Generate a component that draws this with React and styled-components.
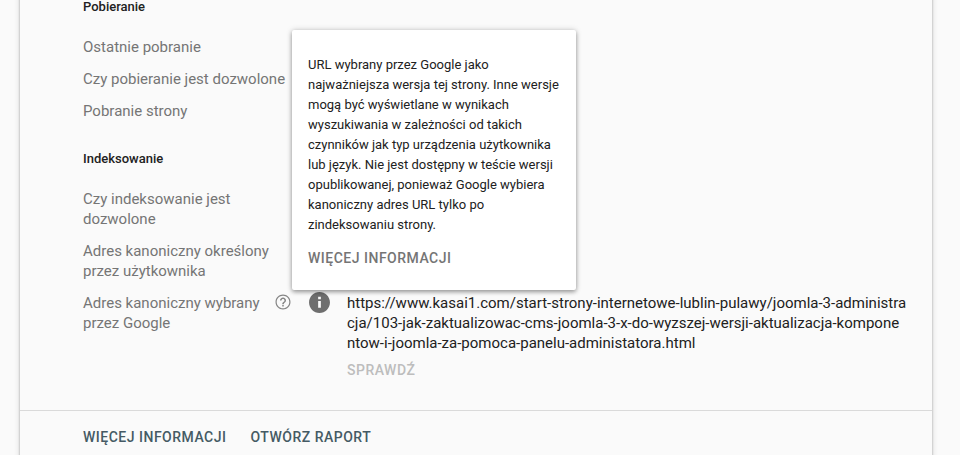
import React from "react";
import styled, { createGlobalStyle } from "styled-components";

const GlobalStyle = createGlobalStyle`
  *, *::before, *::after { box-sizing: border-box; }
  body {
    margin: 0;
    background: #fafafa;
    color: #212121;
    font-family: Roboto, "Liberation Sans", sans-serif;
    font-size: 15px;
    line-height: 20px;
  }
`;

const Page = styled.main`
  height: 100vh;
  overflow: hidden;
`;

const Card = styled.article`
  margin: -16px 28px 16px 20px;
  padding-top: 16px;
  background: #fafafa;
  box-shadow: 0 0 2px rgba(0, 0, 0, 0.28), 0 2px 6px rgba(0, 0, 0, 0.16);
`;

const Content = styled.div`
  display: flex;
  flex-direction: column;
  gap: 31px;
  padding: 0 25px 30px 63px;
`;

const Heading = styled.h2`
  margin: 0 0 23px;
  font-size: 13px;
  line-height: 14px;
  font-weight: 500;
`;

const Rows = styled.dl`
  display: flex;
  flex-direction: column;
  gap: 12px;
  margin: 0;
`;

const Row = styled.div`
  display: grid;
  grid-template-columns: 209px 55px minmax(0, 1fr);
`;

const Label = styled.dt`
  display: flex;
  justify-content: space-between;
  align-items: flex-start;
  color: #757575;
`;

const Value = styled.dd`
  margin: 0;
  word-break: break-all;
`;

const StatusCell = styled.dd`
  position: relative;
  display: flex;
  justify-content: center;
  align-items: flex-start;
  margin: 0;
`;

const IconButton = styled.button`
  display: flex;
  flex: none;
  justify-content: center;
  align-items: center;
  height: 18px;
  padding: 0;
  border: 0;
  background: none;
  color: ${(p) => p.$color};
  cursor: pointer;
`;

const TextButton = styled.button`
  display: block;
  margin-top: ${(p) => p.$top || 0}px;
  padding: 0;
  border: 0;
  background: none;
  color: ${(p) => p.$color};
  font: 500 14px/20px Roboto, "Liberation Sans", sans-serif;
  letter-spacing: 0.5px;
  text-transform: uppercase;
  cursor: pointer;

  &:disabled { cursor: default; }
`;

const TextLink = styled.a`
  color: ${(p) => p.$color};
  font-size: 14px;
  font-weight: 500;
  letter-spacing: 0.5px;
  text-decoration: none;
  text-transform: uppercase;
`;

const Tooltip = styled.div`
  position: absolute;
  left: 0;
  bottom: calc(100% + 3px);
  display: flex;
  flex-direction: column;
  align-items: flex-start;
  gap: 13px;
  width: 284px;
  padding: 25px 16px 22px;
  border-radius: 2px;
  background: #fff;
  box-shadow: 0 2px 4px rgba(0, 0, 0, 0.34), 0 0 6px rgba(0, 0, 0, 0.16);
`;

const TooltipText = styled.p`
  margin: 0;
  font-size: 13px;
`;

const Footer = styled.footer`
  display: flex;
  gap: 24px;
  padding: 16px 63px;
  border-top: 1px solid #dadada;
`;

function HelpIcon() {
  return (
    <svg width="18" height="18" viewBox="0 0 24 24" fill="currentColor" aria-hidden="true">
      <path d="M11 18h2v-2h-2v2zm1-16C6.480 2 2 6.480 2 12s4.480 10 10 10 10-4.480 10-10S17.520 2 12 2zm0 18.400c-4.630 0-8.400-3.770-8.400-8.400s3.770-8.400 8.400-8.400 8.400 3.770 8.400 8.400-3.770 8.400-8.400 8.400zm0-14.400c-2.210 0-4 1.790-4 4h2c0-1.100.9-2 2-2s2 .9 2 2c0 2-3 1.750-3 5h2c0-2.250 3-2.500 3-5 0-2.210-1.790-4-4-4z" />
    </svg>
  );
}

function InfoIcon() {
  return (
    <svg width="23" height="23" viewBox="1 1 22 22" fill="currentColor" aria-hidden="true">
      <path d="M12 2C6.480 2 2 6.480 2 12s4.480 10 10 10 10-4.480 10-10S17.520 2 12 2zm1.300 15h-2.600v-6.500h2.600V17zm0-8h-2.600V6.600h2.600V9z" />
    </svg>
  );
}

function Group({ title, children }) {
  return (
    <section>
      <Heading>{title}</Heading>
      <Rows>{children}</Rows>
    </section>
  );
}

function LabelRow({ label }) {
  return (
    <Row>
      <Label>{label}</Label>
    </Row>
  );
}

export default function App() {
  return (
    <Page>
      <GlobalStyle />
      <Card>
        <Content>
          <Group title="Pobieranie">
            <LabelRow label="Ostatnie pobranie" />
            <LabelRow label="Czy pobieranie jest dozwolone" />
            <LabelRow label="Pobranie strony" />
          </Group>
          <Group title="Indeksowanie">
            <LabelRow label="Czy indeksowanie jest dozwolone" />
            <LabelRow label="Adres kanoniczny określony przez użytkownika" />
            <Row>
              <Label>
                Adres kanoniczny wybrany przez Google
                <IconButton $color="#858585" aria-label="Pomoc">
                  <HelpIcon />
                </IconButton>
              </Label>
              <StatusCell>
                <IconButton $color="#6e6e6e" aria-label="Informacja">
                  <InfoIcon />
                </IconButton>
                <Tooltip role="tooltip">
                  <TooltipText>
                    URL wybrany przez Google jako najważniejsza wersja tej strony. Inne wersje mogą być
                    wyświetlane w wynikach wyszukiwania w zależności od takich czynników jak typ
                    urządzenia użytkownika lub język. Nie jest dostępny w teście wersji opublikowanej,
                    ponieważ Google wybiera kanoniczny adres URL tylko po zindeksowaniu strony.
                  </TooltipText>
                  <TextLink href="#wiecej" $color="#757575">Więcej informacji</TextLink>
                </Tooltip>
              </StatusCell>
              <Value>
                https://www.kasai1.com/start-strony-internetowe-lublin-pulawy/joomla-3-administracja/103-jak-zaktualizowac-cms-joomla-3-x-do-wyzszej-wersji-aktualizacja-komponentow-i-joomla-za-pomoca-panelu-administatora.html
                <TextButton disabled $color="#bdbdbd" $top={7}>Sprawdź</TextButton>
              </Value>
            </Row>
          </Group>
        </Content>
        <Footer>
          <TextLink href="#informacje" $color="#455a64">Więcej informacji</TextLink>
          <TextLink href="#raport" $color="#455a64">Otwórz raport</TextLink>
        </Footer>
      </Card>
    </Page>
  );
}
